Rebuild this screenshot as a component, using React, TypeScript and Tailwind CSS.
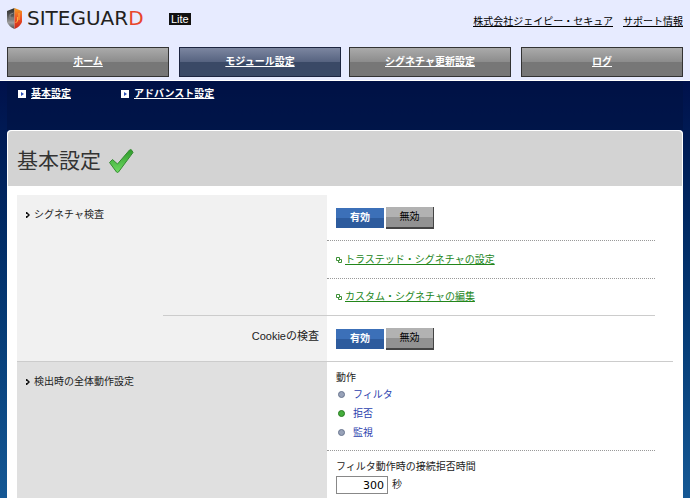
import { useState } from 'react';

const navItems = [
    [
        { label: 'ホーム', active: false },
        { label: 'モジュール設定', active: true },
    ],
    [
        { label: 'シグネチャ更新設定', active: false },
        { label: 'ログ', active: false },
    ],
];

const actions = ['フィルタ', '拒否', '監視'];

function Logo() {
    return (
        <a href="#" aria-label="SITEGUARD Lite" className="block">
            <svg width="184" height="24" viewBox="0 0 184 24" role="img">
                <defs>
                    <linearGradient id="shieldLeft" x1="0" y1="0" x2="0" y2="1">
                        <stop offset="0" stopColor="#2b2b2b" />
                        <stop offset="0.35" stopColor="#555" />
                        <stop offset="0.7" stopColor="#a0a0a0" />
                        <stop offset="1" stopColor="#4a4a4a" />
                    </linearGradient>
                    <linearGradient id="shieldRight" x1="0" y1="0" x2="0" y2="1">
                        <stop offset="0" stopColor="#f6a021" />
                        <stop offset="0.5" stopColor="#ee4f24" />
                        <stop offset="1" stopColor="#c8281c" />
                    </linearGradient>
                </defs>
                <path d="M7.5 1 L0 4 V15 Q2 20 7.5 22 Z" fill="url(#shieldLeft)" />
                <path d="M7.5 1 L15 4 V15 Q13 20 7.5 22 Z" fill="url(#shieldRight)" />
                <path d="M6.5 6 L3 7.5 V11 H6.5" fill="none" stroke="#8a8a8a" />
                <path d="M8.5 16 L10.5 14 V10 M12 6 V13" fill="none" stroke="#ffb03a" />
                <text x="20" y="18" fontFamily="DejaVu Sans, sans-serif" fontSize="20" fill="#231f20">
                    SITEGUAR<tspan fill="#e8452c">D</tspan>
                </text>
                <rect x="162" y="6" width="22" height="12" fill="#111" />
                <text x="164" y="16" fontFamily="Liberation Sans, sans-serif" fontSize="11" fill="#fff">Lite</text>
            </svg>
        </a>
    );
}

function CheckMark() {
    return (
        <svg width="26" height="26" viewBox="0 0 26 26" aria-hidden="true">
            <defs>
                <linearGradient id="check" x1="0" y1="0" x2="0" y2="1">
                    <stop offset="0" stopColor="#2f9a2c" />
                    <stop offset="1" stopColor="#6fdc62" />
                </linearGradient>
            </defs>
            <path
                d="M0.5 14.5 L3.5 11.5 L8.5 16 L20.5 2 Q22 1 23 2.5 L24 4.5 L9.5 24 Q8.5 25 7.5 24 Z"
                fill="url(#check)"
                stroke="#358a31"
                strokeLinejoin="round"
            />
        </svg>
    );
}

function SubLink({ label }: { label: string }) {
    return (
        <a href="#" className="flex items-center gap-[5px] font-bold text-white">
            <svg width="8" height="8" viewBox="0 0 8 8" aria-hidden="true">
                <rect width="8" height="8" fill="#fff" />
                <path d="M3 2 L6 4 L3 6 Z" fill="#2b50b8" />
            </svg>
            <span className="underline">{label}</span>
        </a>
    );
}

function RowTitle({ children }: { children: string }) {
    return (
        <h2 className="flex items-center gap-1">
            <svg width="5" height="6" viewBox="0 0 5 6" aria-hidden="true">
                <path d="M1 0h1.5v1h1v1h1v2h-1v1h-1v1h-1.5v-2h1.5v-2h-1.5z" fill="#111" />
            </svg>
            {children}
        </h2>
    );
}

function Toggle({ label }: { label: string }) {
    const [enabled, setEnabled] = useState(true);
    const on = 'h-5 w-12 bg-linear-to-b from-[#3c70b8] from-50% to-[#2d5b9d] to-50% font-bold text-white';
    const off =
        'h-[22px] w-12 border-r border-b-2 border-[#444] bg-linear-to-b from-[#b2b2b2] from-50% to-[#929292] to-50% text-black';

    return (
        <div role="group" aria-label={label} className="flex h-[22px] items-center gap-0.5">
            <button type="button" aria-pressed={enabled} onClick={() => setEnabled(true)} className={enabled ? on : off}>
                有効
            </button>
            <button type="button" aria-pressed={!enabled} onClick={() => setEnabled(false)} className={enabled ? off : on}>
                無効
            </button>
        </div>
    );
}

function GreenLink({ children }: { children: string }) {
    return (
        <a href="#" className="flex items-center gap-[3px] text-[#23861b]">
            <svg width="6" height="6" viewBox="0 0 6 6" fill="none" stroke="#3f9138" aria-hidden="true">
                <path d="M0.5 0.5h3v3h-3z M4 2.5h1.5v3h-3v-1.5" />
            </svg>
            <span className="underline">{children}</span>
        </a>
    );
}

export default function App() {
    const [action, setAction] = useState('拒否');

    return (
        <div className="min-h-screen bg-linear-to-b from-[#00104a] from-15% to-[#165a96] font-['Liberation_Sans','Noto_Sans_CJK_JP',sans-serif] text-[10px] leading-4 text-[#222]">
            <header className="border-b border-white bg-[#e7ebff] px-[7px] pt-[7px] pb-[3px]">
                <div className="flex h-10 items-start justify-between">
                    <Logo />
                    <div className="flex gap-2.5 pt-[7px] text-black underline">
                        <a href="#">株式会社ジェイピー・セキュア</a>
                        <a href="#">サポート情報</a>
                    </div>
                </div>
                <nav className="grid grid-cols-2 gap-2">
                    {navItems.map((group, i) => (
                        <div key={i} className="grid grid-cols-2 gap-2.5">
                            {group.map((item) => (
                                <a
                                    key={item.label}
                                    href="#"
                                    className={
                                        item.active
                                            ? 'flex h-[30px] items-center justify-center border border-[#1d2540] bg-linear-to-b from-[#7c86a0] via-[#566380] via-50% to-[#3a4966] to-50% font-bold text-white underline'
                                            : 'flex h-[30px] items-center justify-center border border-[#333] bg-linear-to-b from-[#aaaaaa] via-[#8c8c8c] via-50% to-[#777777] to-50% font-bold text-white underline'
                                    }
                                >
                                    {item.label}
                                </a>
                            ))}
                        </div>
                    ))}
                </nav>
            </header>

            <div className="mx-[7px] flex h-[49px] items-start gap-[50px] bg-[#001342]/60 px-[11px] pt-[5px]">
                <SubLink label="基本設定" />
                <SubLink label="アドバンスト設定" />
            </div>

            <main className="mx-[7px] rounded-t border border-b-0 border-white bg-white">
                <div className="flex h-[55px] items-center gap-2 rounded-t bg-[#d3d3d3] px-[9px] pt-1">
                    <h1 className="text-[21px] leading-8 text-[#333]">基本設定</h1>
                    <CheckMark />
                </div>

                <div className="px-[9px] pt-[9px]">
                    <section className="border-b border-[#ccc] bg-linear-to-r from-[#f1f1f1] from-[310px] to-white to-[310px]">
                        <div className="grid grid-cols-[310px_1fr]">
                            <div className="px-2 pt-3">
                                <RowTitle>シグネチャ検査</RowTitle>
                            </div>
                            <div className="mr-[18px]">
                                <div className="border-b border-dotted border-[#999] px-[9px] pt-3 pb-[11px]">
                                    <Toggle label="シグネチャ検査" />
                                </div>
                                <div className="border-b border-dotted border-[#999] px-[9px] pt-[11px] pb-2.5">
                                    <GreenLink>トラステッド・シグネチャの設定</GreenLink>
                                </div>
                                <div className="px-[9px] py-2.5">
                                    <GreenLink>カスタム・シグネチャの編集</GreenLink>
                                </div>
                            </div>
                        </div>
                        <div className="mr-[18px] ml-[146px] grid grid-cols-[164px_1fr] border-t border-[#ccc] pt-3 pb-[11px]">
                            <h2 className="pr-2 text-right text-[11px]">Cookieの検査</h2>
                            <div className="px-[9px]">
                                <Toggle label="Cookieの検査" />
                            </div>
                        </div>
                    </section>

                    <section className="grid grid-cols-[310px_1fr]">
                        <div className="bg-[#e0e0e0] px-2 pt-3">
                            <RowTitle>検出時の全体動作設定</RowTitle>
                        </div>
                        <div className="mr-[18px]">
                            <fieldset className="border-b border-dotted border-[#999] px-[9px] pt-2 pb-2">
                                <legend className="float-left w-full leading-[15px]">動作</legend>
                                {actions.map((name) => (
                                    <label key={name} className="clear-both flex h-[19px] items-center gap-2 pl-0.5 text-[#2c3fae]">
                                        <input
                                            type="radio"
                                            name="action"
                                            checked={action === name}
                                            onChange={() => setAction(name)}
                                            className="size-[7px] appearance-none rounded-full border border-[#69758f] bg-[#98a2b8] checked:border-[#267a20] checked:bg-[#45ae3c]"
                                        />
                                        {name}
                                    </label>
                                ))}
                            </fieldset>
                            <div className="px-[9px] pt-2 pb-3">
                                <label htmlFor="deny-time" className="block">
                                    フィルタ動作時の接続拒否時間
                                </label>
                                <div className="mt-px flex items-center gap-1">
                                    <input
                                        id="deny-time"
                                        type="text"
                                        defaultValue="300"
                                        className="h-[18px] w-[52px] border border-[#888] bg-white px-[3px] text-right font-['DejaVu_Sans',sans-serif] text-[11px] text-black"
                                    />
                                    <span>秒</span>
                                </div>
                            </div>
                        </div>
                    </section>
                </div>
            </main>
        </div>
    );
}
